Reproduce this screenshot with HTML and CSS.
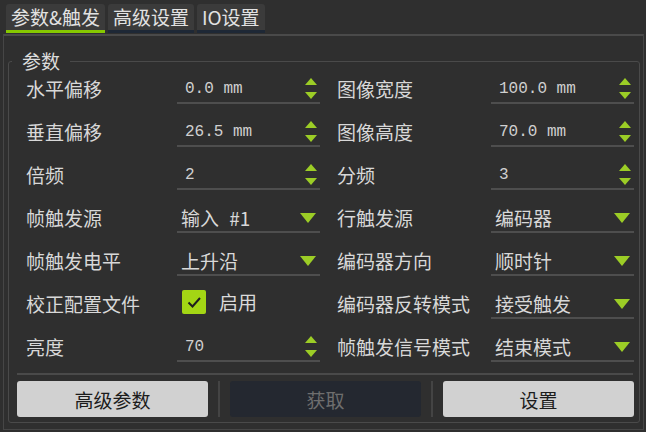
FILE: index.html
```html
<!DOCTYPE html>
<html lang="zh-CN">
<head>
<meta charset="utf-8">
<title>参数&amp;触发</title>
<link rel="stylesheet" href="styles.css">
</head>
<body>
<div class="tabs">
  <div class="tab active">参数&amp;触发</div>
  <div class="tab">高级设置</div>
  <div class="tab">IO设置</div>
</div>
<div class="pane">
  <fieldset class="group">
    <legend>参数</legend>
    <div class="grid">
      <div class="label">水平偏移</div>
      <div class="field spin"><span class="num">0.0 mm</span><span class="arrows"><i class="up"></i><i class="down"></i></span></div>
      <div class="label r">图像宽度</div>
      <div class="field spin"><span class="num">100.0 mm</span><span class="arrows"><i class="up"></i><i class="down"></i></span></div>

      <div class="label">垂直偏移</div>
      <div class="field spin"><span class="num">26.5 mm</span><span class="arrows"><i class="up"></i><i class="down"></i></span></div>
      <div class="label r">图像高度</div>
      <div class="field spin"><span class="num">70.0 mm</span><span class="arrows"><i class="up"></i><i class="down"></i></span></div>

      <div class="label">倍频</div>
      <div class="field spin"><span class="num">2</span><span class="arrows"><i class="up"></i><i class="down"></i></span></div>
      <div class="label r">分频</div>
      <div class="field spin"><span class="num">3</span><span class="arrows"><i class="up"></i><i class="down"></i></span></div>

      <div class="label">帧触发源</div>
      <div class="field combo"><span class="txt">输入 #1</span><i class="caret"></i></div>
      <div class="label r">行触发源</div>
      <div class="field combo"><span class="txt">编码器</span><i class="caret"></i></div>

      <div class="label">帧触发电平</div>
      <div class="field combo"><span class="txt">上升沿</span><i class="caret"></i></div>
      <div class="label r">编码器方向</div>
      <div class="field combo"><span class="txt">顺时针</span><i class="caret"></i></div>

      <div class="label">校正配置文件</div>
      <div class="field check"><span class="box"><svg width="24" height="24" viewBox="0 0 24 24"><path d="M6.5 12.5 L10.5 16.5 L18 8" fill="none" stroke="#1e1e1e" stroke-width="2"/></svg></span><span class="txt">启用</span></div>
      <div class="label r">编码器反转模式</div>
      <div class="field combo"><span class="txt">接受触发</span><i class="caret"></i></div>

      <div class="label">亮度</div>
      <div class="field spin"><span class="num">70</span><span class="arrows"><i class="up"></i><i class="down"></i></span></div>
      <div class="label r">帧触发信号模式</div>
      <div class="field combo"><span class="txt">结束模式</span><i class="caret"></i></div>
    </div>
    <div class="sep"></div>
    <div class="buttons">
      <button class="btn">高级参数</button>
      <span class="vsep"></span>
      <button class="btn disabled" disabled>获取</button>
      <span class="vsep"></span>
      <button class="btn">设置</button>
    </div>
  </fieldset>
</div>
</body>
</html>
```
FILE: styles.css
```css
html, body {
  margin: 0;
  padding: 0;
}
body {
  width: 646px;
  height: 432px;
  overflow: hidden;
  background: #2f2f2f;
  color: #dadada;
  font-family: "Noto Sans CJK SC", "Noto Sans", sans-serif;
  font-size: 19px;
}

.tabs {
  display: flex;
  gap: 3px;
  padding: 4px 0 0 6px;
  box-sizing: border-box;
  height: 34px;
}
.tab {
  padding: 0 5px;
  background: #3b3b3b;
  border-radius: 3px 3px 0 0;
  line-height: 26px;
  height: 26px;
  border-bottom: 3px solid #1e2836;
  color: #e2e2e2;
  white-space: nowrap;
}
.tab.active {
  border-bottom-color: #86c800;
}

.pane {
  margin: 0 2px 0 3px;
  border: 1px solid #464646;
  border-top: 2px solid #4a4a4a;
  padding: 14px 3px 0 4px;
  height: 396px;
  box-sizing: border-box;
}

.group {
  margin: 0;
  padding: 2px 5px 5px 8px;
  border: 1px solid #4a4a4a;
  border-radius: 3px;
  min-width: 0;
}
.group legend {
  padding: 0 10px;
  margin-left: -5px;
  line-height: 22px;
  color: #dcdcdc;
}

.grid {
  display: grid;
  grid-template-columns: 160px 143px 171px 143px;
  grid-auto-rows: 30px;
  row-gap: 13px;
}
.label {
  padding-left: 9px;
  line-height: 30px;
  white-space: nowrap;
  color: #d8d8d8;
}
.label.r {
  padding-left: 17px;
}

.field {
  display: flex;
  align-items: center;
  border-bottom: 2px solid #4e4e4e;
  box-sizing: border-box;
  padding-top: 1px;
}
.num {
  flex: 1;
  padding-left: 8px;
  font-family: "Liberation Mono", "DejaVu Sans Mono", monospace;
  font-size: 16px;
  color: #d0d0d0;
}
.arrows {
  display: flex;
  flex-direction: column;
  gap: 7px;
  margin-right: 3px;
}
.arrows i {
  display: block;
  width: 0;
  height: 0;
  border-left: 6px solid transparent;
  border-right: 6px solid transparent;
}
.arrows .up {
  border-bottom: 7px solid #9ccd26;
}
.arrows .down {
  border-top: 7px solid #9ccd26;
}

.combo .txt {
  flex: 1;
  padding-left: 4px;
  line-height: 26px;
  word-spacing: 6px;
  color: #d8d8d8;
}
.caret {
  display: block;
  width: 0;
  height: 0;
  border-left: 8px solid transparent;
  border-right: 8px solid transparent;
  border-top: 10px solid #9ccd26;
  margin-right: 4px;
}

.field.check {
  border-bottom: none;
  padding-top: 0;
  align-items: flex-start;
}
.box {
  display: block;
  width: 24px;
  height: 24px;
  margin: 1px 0 0 5px;
  background: #a3d614;
  border-radius: 2px;
}
.box svg {
  display: block;
}
.check .txt {
  margin-left: 13px;
  line-height: 26px;
}

.sep {
  height: 2px;
  background: #4a4a4a;
  margin: 11px 1px 6px 0;
}

.buttons {
  display: flex;
  height: 36px;
}
.btn {
  flex: 1;
  border: none;
  border-radius: 3px;
  background: #d1d1d1;
  color: #1c1c1c;
  font-family: "Noto Sans CJK SC", "Noto Sans", sans-serif;
  font-size: 19px;
  padding: 0;
}
.btn.disabled {
  background: #242830;
  color: #6e6e6e;
}
.vsep {
  width: 2px;
  background: #444444;
  margin: 0 10px;
}
```
